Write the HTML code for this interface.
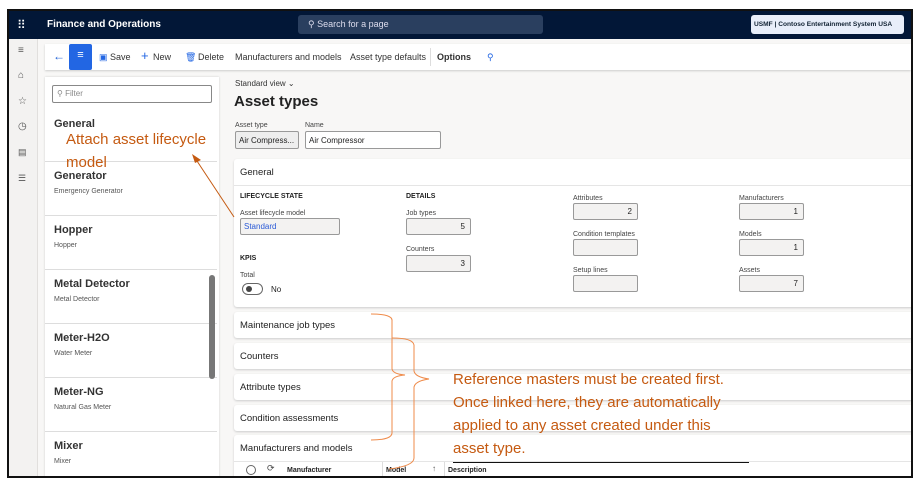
<!DOCTYPE html>
<html><head><meta charset="utf-8"><style>
*{box-sizing:border-box;margin:0;padding:0}
body{width:919px;height:480px;background:#fff;font-family:"Liberation Sans",sans-serif;position:relative;overflow:hidden;color:#222}
.a{position:absolute}
.frame{left:7px;top:9px;width:906px;height:469px;border:2px solid #111;overflow:hidden;background:#f8f7f6}
.top{left:0;top:0;width:902px;height:28px;background:#021737}
.rail{left:0;top:28px;width:29px;height:441px;background:#f3f2f1;border-right:1px solid #e1dfdd}
.tb{left:36px;top:33px;width:866px;height:26px;background:#fff;box-shadow:0 1px 2px #ccc;font-size:9px;color:#333}
.tb span{position:absolute;top:8px}
.lp{left:36px;top:66px;width:174px;height:403px;background:#fff;box-shadow:0 0 2px #ccc}
.it{position:absolute;left:0;width:172px;border-top:1px solid #ddd}
.it b{position:absolute;left:9px;top:8px;font-size:11px;font-weight:bold;color:#333}
.it i{position:absolute;left:9px;top:26px;font-size:7px;font-style:normal;color:#555}
.card{background:#fff;box-shadow:0 1px 2px #ccc;border-radius:3px}
.sec{position:absolute;left:225px;width:680px;height:26px}
.sec span{position:absolute;left:6px;top:8px;font-size:9.5px;color:#222}
.lbl{position:absolute;font-size:7px;color:#444}
.inp{position:absolute;width:65px;height:17px;background:#f3f2f1;border:1px solid #999;border-radius:2px;font-size:8px;text-align:right;padding:3px 5px 0 0}
.hd{position:absolute;font-size:7px;font-weight:bold;color:#222}
.or{color:#c55a11;font-size:15px;position:absolute;line-height:23px}
</style></head><body>
<div class="a frame">
 <div class="a top">
  <div class="a" style="left:8px;top:7px;color:#fff;font-size:12px;letter-spacing:1px">⠿</div>
  <div class="a" style="left:38px;top:8px;color:#fff;font-size:10px;font-weight:bold">Finance and Operations</div>
  <div class="a" style="left:289px;top:4px;width:245px;height:19px;background:#2a3f5f;border-radius:3px;color:#dde;font-size:9px;padding:4px 0 0 10px">⚲ Search for a page</div>
  <div class="a" style="left:742px;top:4px;width:153px;height:19px;background:#e8eefa;border-radius:3px;color:#123;font-size:6.6px;font-weight:bold;padding:6px 0 0 3px;white-space:nowrap">USMF | Contoso Entertainment System USA</div>
 </div>
 <div class="a rail">
  <div class="a" style="left:9px;top:6px;font-size:10px;color:#555">≡</div>
  <div class="a" style="left:9px;top:31px;font-size:10px;color:#555">⌂</div>
  <div class="a" style="left:9px;top:57px;font-size:10px;color:#555">☆</div>
  <div class="a" style="left:9px;top:82px;font-size:10px;color:#555">◷</div>
  <div class="a" style="left:9px;top:108px;font-size:9px;color:#555">▤</div>
  <div class="a" style="left:9px;top:134px;font-size:9px;color:#555">☰</div>
 </div>
 <div class="a tb">
  <span style="left:8px;top:5px;color:#1d5fd6;font-size:12px">←</span>
  <div class="a" style="left:24px;top:0;width:23px;height:26px;background:#2266e3;border-radius:2px;color:#fff;font-size:11px;text-align:center;padding-top:5px">≡</div>
  <span style="left:54px;color:#2266e3">▣</span><span style="left:65px">Save</span>
  <span style="left:96px;color:#2266e3;top:4px;font-size:13px">+</span><span style="left:108px">New</span>
  <span style="left:140px;color:#2266e3">🗑</span><span style="left:153px">Delete</span>
  <span style="left:190px">Manufacturers and models</span>
  <span style="left:305px">Asset type defaults</span>
  <div class="a" style="left:385px;top:4px;width:1px;height:18px;background:#ddd"></div>
  <span style="left:392px;font-weight:bold">Options</span>
  <span style="left:442px;color:#2266e3">⚲</span>
 </div>
 <div class="a lp">
  <div class="a" style="left:7px;top:8px;width:160px;height:18px;border:1px solid #888;border-radius:2px;font-size:8px;color:#888;padding:3px 0 0 4px">⚲ Filter</div>
  <div class="it" style="top:33px;height:50px;border:0"><b>General</b></div>
  <div class="it" style="top:84px;height:54px"><b>Generator</b><i>Emergency Generator</i></div>
  <div class="it" style="top:138px;height:54px"><b>Hopper</b><i>Hopper</i></div>
  <div class="it" style="top:192px;height:54px"><b>Metal Detector</b><i>Metal Detector</i></div>
  <div class="it" style="top:246px;height:54px"><b>Meter-H2O</b><i>Water Meter</i></div>
  <div class="it" style="top:300px;height:54px"><b>Meter-NG</b><i>Natural Gas Meter</i></div>
  <div class="it" style="top:354px;height:54px"><b>Mixer</b><i>Mixer</i></div>
  <div class="a" style="left:164px;top:198px;width:6px;height:104px;background:#777;border-radius:3px"></div>
 </div>
 <div class="a" style="left:226px;top:68px;font-size:8px;color:#333">Standard view ⌄</div>
 <div class="a" style="left:225px;top:82px;font-size:15px;font-weight:bold;color:#222">Asset types</div>
 <div class="lbl" style="left:226px;top:111px">Asset type</div>
 <div class="lbl" style="left:296px;top:111px">Name</div>
 <div class="a" style="left:226px;top:120px;width:64px;height:18px;background:#eee;border:1px solid #999;border-radius:2px;font-size:8px;padding:4px 0 0 3px">Air Compress...</div>
 <div class="a" style="left:296px;top:120px;width:136px;height:18px;background:#fff;border:1px solid #999;border-radius:2px;font-size:8px;padding:4px 0 0 3px">Air Compressor</div>
 <div class="a card" style="left:225px;top:148px;width:680px;height:148px">
  <div class="a" style="left:6px;top:8px;font-size:9.5px">General</div>
  <div class="a" style="left:0;top:26px;width:680px;height:1px;background:#e5e5e5"></div>
  <div class="hd" style="left:6px;top:34px">LIFECYCLE STATE</div>
  <div class="lbl" style="left:6px;top:51px">Asset lifecycle model</div>
  <div class="inp" style="left:6px;top:59px;width:100px;text-align:left;padding-left:3px;color:#2a5ad6">Standard</div>
  <div class="hd" style="left:6px;top:96px">KPIS</div>
  <div class="lbl" style="left:6px;top:113px">Total</div>
  <div class="a" style="left:8px;top:124px;width:21px;height:12px;border:1px solid #666;border-radius:6px"><div class="a" style="left:3px;top:2px;width:6px;height:6px;border-radius:3px;background:#444"></div></div>
  <div class="a" style="left:37px;top:126px;font-size:8px">No</div>
  <div class="hd" style="left:172px;top:34px">DETAILS</div>
  <div class="lbl" style="left:172px;top:51px">Job types</div>
  <div class="inp" style="left:172px;top:59px">5</div>
  <div class="lbl" style="left:172px;top:87px">Counters</div>
  <div class="inp" style="left:172px;top:96px">3</div>
  <div class="lbl" style="left:339px;top:36px">Attributes</div>
  <div class="inp" style="left:339px;top:44px">2</div>
  <div class="lbl" style="left:339px;top:72px">Condition templates</div>
  <div class="inp" style="left:339px;top:80px"></div>
  <div class="lbl" style="left:339px;top:108px">Setup lines</div>
  <div class="inp" style="left:339px;top:116px"></div>
  <div class="lbl" style="left:505px;top:36px">Manufacturers</div>
  <div class="inp" style="left:505px;top:44px">1</div>
  <div class="lbl" style="left:505px;top:72px">Models</div>
  <div class="inp" style="left:505px;top:80px">1</div>
  <div class="lbl" style="left:505px;top:108px">Assets</div>
  <div class="inp" style="left:505px;top:116px">7</div>
 </div>
 <div class="sec card" style="top:301px"><span>Maintenance job types</span></div>
 <div class="sec card" style="top:332px"><span>Counters</span></div>
 <div class="sec card" style="top:363px"><span>Attribute types</span></div>
 <div class="sec card" style="top:394px"><span>Condition assessments</span></div>
 <div class="sec card" style="top:424px;height:50px"><span>Manufacturers and models</span>
  <div class="a" style="left:0;top:26px;width:680px;height:1px;background:#e5e5e5"></div>
  <div class="a" style="left:12px;top:30px;width:10px;height:10px;border:1px solid #666;border-radius:5px"></div>
  <div class="a" style="left:33px;top:28px;font-size:9px;color:#444">⟳</div>
  <div class="a" style="left:53px;top:32px;font-size:7px;font-weight:bold">Manufacturer</div>
  <div class="a" style="left:148px;top:27px;width:1px;height:20px;background:#ddd"></div>
  <div class="a" style="left:152px;top:32px;font-size:7px;font-weight:bold">Model</div>
  <div class="a" style="left:198px;top:29px;font-size:8px;color:#555">↑</div>
  <div class="a" style="left:210px;top:27px;width:1px;height:20px;background:#ddd"></div>
  <div class="a" style="left:214px;top:32px;font-size:7px;font-weight:bold">Description</div>
 </div>
 <div class="a" style="left:444px;top:451px;width:296px;height:1px;background:#111"></div>
 <div class="or" style="left:57px;top:117px">Attach asset lifecycle<br>model</div>
 <div class="or" style="left:444px;top:357px">Reference masters must be created first.<br>Once linked here, they are automatically<br>applied to any asset created under this<br>asset type.</div>
 <svg class="a" style="left:0;top:0" width="906" height="469">
  <g fill="none" stroke="#c55a11" stroke-width="1">
   <line x1="225" y1="206" x2="186" y2="147"/>
  </g>
  <polygon points="183,143 192,149 186,152" fill="#c55a11"/>
  <g fill="none" stroke="#ef8b4a" stroke-width="1">
   <path d="M362 303 Q384 303 383 310 V358 Q384 363 396 364 Q384 365 383 370 V421 Q384 429 362 429"/>
   <path d="M383 327 Q404 327 405 334 V360 Q406 366 420 368 Q406 370 405 376 V447 Q405 455 380 458"/>
  </g>
 </svg>
</div>
</body></html>
